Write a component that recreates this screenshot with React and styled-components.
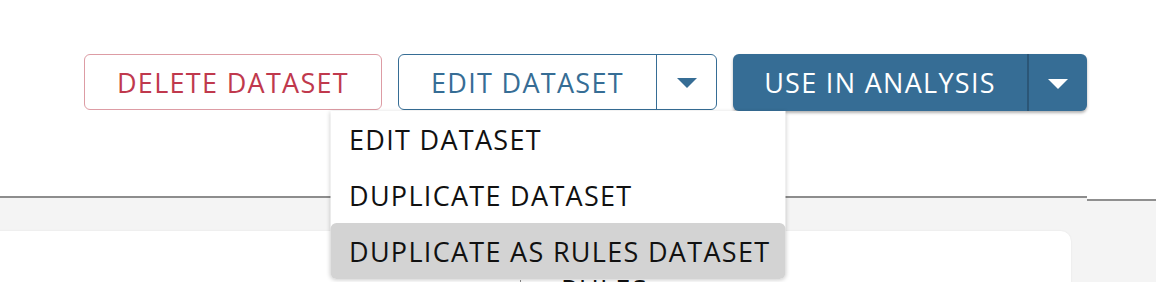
import React from "react";
import styled, { createGlobalStyle } from "styled-components";

const BLUE = "#366d95";
const RED = "#c0394d";

const GlobalStyle = createGlobalStyle`
  html, body {
    margin: 0;
    padding: 0;
    background: #f4f4f4;
    font-family: "Open Sans", "Noto Sans", sans-serif;
    overflow: hidden;
  }
`;

const App = () => {
  return (
    <Page>
      <GlobalStyle />
      <Top>
        <Header>
          <Actions>
            <OutlineButton $tone="danger">DELETE DATASET</OutlineButton>
            <SplitGroup>
              <SplitMain>EDIT DATASET</SplitMain>
              <SplitToggle>
                <Caret $color={BLUE} />
              </SplitToggle>
              <Menu>
                <MenuItem>EDIT DATASET</MenuItem>
                <MenuItem>DUPLICATE DATASET</MenuItem>
                <MenuItem $active>DUPLICATE AS RULES DATASET</MenuItem>
              </Menu>
            </SplitGroup>
            <PrimaryGroup>
              <PrimaryMain>USE IN ANALYSIS</PrimaryMain>
              <PrimaryToggle>
                <Caret $color="#fff" />
              </PrimaryToggle>
            </PrimaryGroup>
          </Actions>
        </Header>
        <SideStrip />
      </Top>
      <Card>
        <CardRule />
        <CardTitle>RULES</CardTitle>
      </Card>
    </Page>
  );
};

const Page = styled.div`
  width: 1156px;
  height: 282px;
  overflow: hidden;
`;

const Top = styled.div`
  display: flex;
  align-items: flex-start;
`;

const Header = styled.div`
  width: 1087px;
  height: 198px;
  box-sizing: border-box;
  background: #fff;
  border-bottom: 2px solid #8d8d8d;
  position: relative;
  z-index: 2;
`;

const SideStrip = styled.div`
  flex: 1;
  height: 201px;
  box-sizing: border-box;
  background: #fff;
  border-bottom: 2px solid #8f8f8f;
`;

const Actions = styled.div`
  display: flex;
  justify-content: flex-end;
  gap: 16px;
  padding-top: 54px;
`;

const ButtonText = `
  font-family: "Open Sans", "Noto Sans", sans-serif;
  font-size: 27px;
  letter-spacing: 1.3px;
  line-height: 1;
  height: 56px;
  box-sizing: border-box;
  display: flex;
  align-items: center;
  justify-content: center;
  cursor: pointer;
`;

const OutlineButton = styled.button`
  ${ButtonText}
  width: 298px;
  background: #fff;
  color: ${(p) => (p.$tone === "danger" ? RED : BLUE)};
  border: 1.5px solid ${(p) => (p.$tone === "danger" ? "#dd9ca4" : BLUE)};
  border-radius: 6px;
  padding: 0;
`;

const SplitGroup = styled.div`
  position: relative;
  display: flex;
  width: 319px;
  height: 56px;
  box-sizing: border-box;
  border: 1.5px solid ${BLUE};
  border-radius: 6px;
  background: #fff;
`;

const SplitMain = styled.div`
  ${ButtonText}
  height: 100%;
  width: 258px;
  color: ${BLUE};
  border-right: 1.5px solid ${BLUE};
`;

const SplitToggle = styled.div`
  flex: 1;
  display: flex;
  align-items: center;
  justify-content: center;
`;

const Caret = styled.span`
  width: 0;
  height: 0;
  border-left: 10.5px solid transparent;
  border-right: 10.5px solid transparent;
  border-top: 10px solid ${(p) => p.$color};
  margin-top: 2px;
`;

const PrimaryGroup = styled.div`
  display: flex;
  width: 354px;
  height: 57px;
  border-radius: 6px;
  background: ${BLUE};
  box-shadow: 0 2px 3px rgba(0, 0, 0, 0.3);
  overflow: hidden;
`;

const PrimaryMain = styled.div`
  ${ButtonText}
  height: 100%;
  width: 296px;
  color: #fff;
  border-right: 2px solid #2b5677;
`;

const PrimaryToggle = styled.div`
  flex: 1;
  display: flex;
  align-items: center;
  justify-content: center;
`;

const Menu = styled.div`
  position: absolute;
  top: calc(100% + 2px);
  left: 50%;
  transform: translateX(-50%);
  width: 455px;
  background: #fff;
  box-shadow: 0 1px 4px rgba(0, 0, 0, 0.2);
  border-radius: 0 0 6px 6px;
  z-index: 5;
`;

const MenuItem = styled.div`
  height: 56px;
  display: flex;
  align-items: center;
  padding-left: 19px;
  font-size: 27px;
  letter-spacing: 1.3px;
  color: #111;
  border-radius: 6px;
  background: ${(p) => (p.$active ? "#d3d3d3" : "transparent")};
`;

const Card = styled.div`
  margin: 30px 85px 0 -20px;
  height: 120px;
  background: #fff;
  border-radius: 10px;
  box-shadow: 0 0 2px rgba(0, 0, 0, 0.08);
  display: flex;
  align-items: flex-start;
  padding-top: 45px;
  box-sizing: border-box;
`;

const CardRule = styled.div`
  width: 1px;
  height: 30px;
  margin-left: 540px;
  margin-top: 4px;
  background: #8a8a8a;
`;

const CardTitle = styled.div`
  margin-left: 40px;
  font-size: 27px;
  line-height: 1;
  letter-spacing: 1.3px;
  color: #111;
`;

export default App;
